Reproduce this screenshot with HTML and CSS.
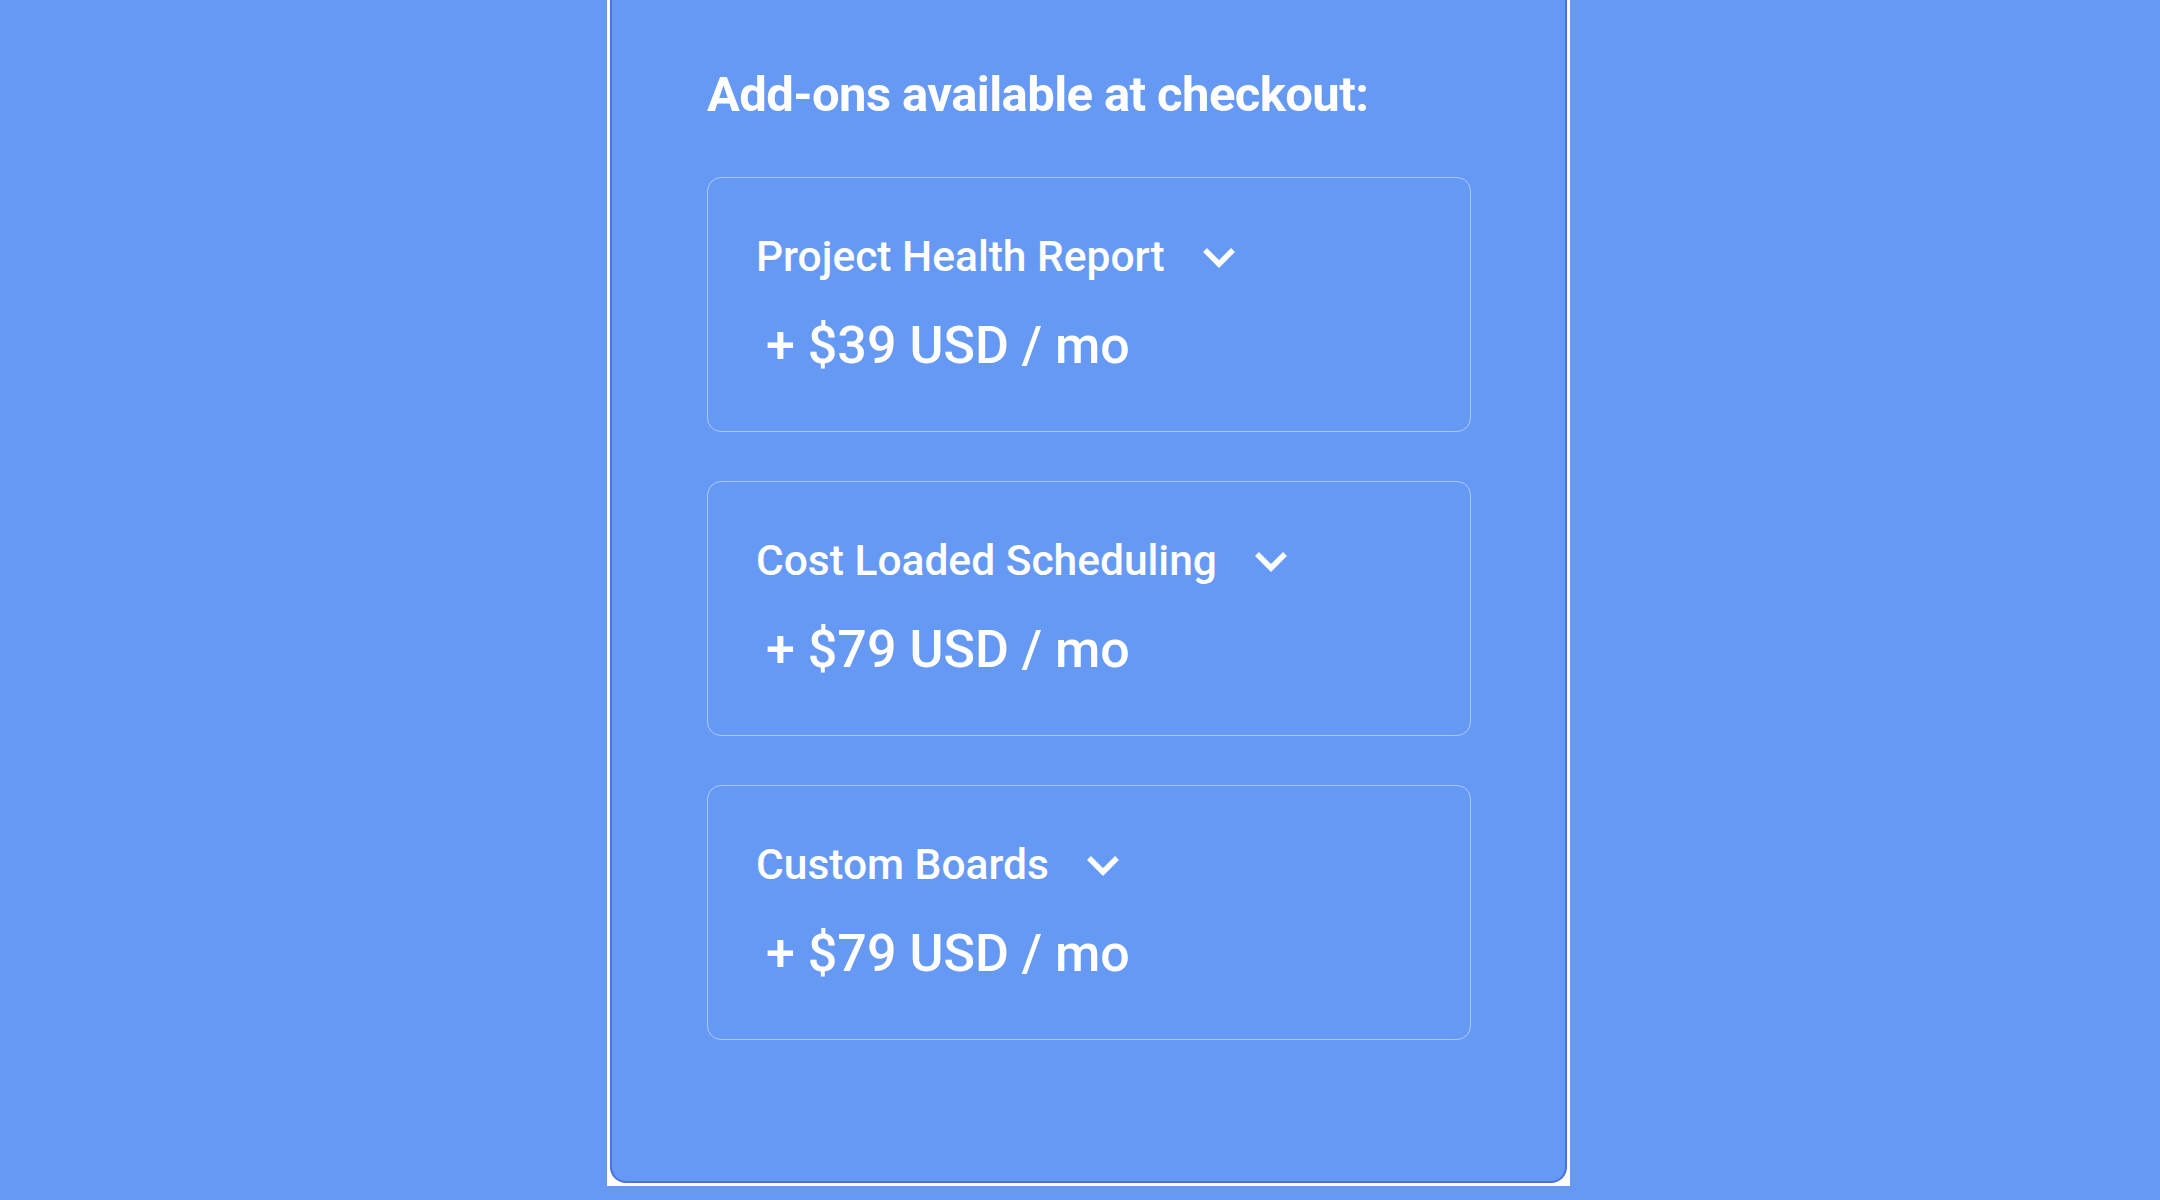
FILE: index.html
```html
<!DOCTYPE html>
<html lang="en">
<head>
    <meta charset="UTF-8">
    <meta name="viewport" content="width=device-width, initial-scale=1.0">
    <title>Add-ons</title>
    <link rel="stylesheet" href="styles.css">
</head>
<body>
    <div class="frame">
        <section class="panel">
            <h2 class="addons-title">Add-ons available at checkout:</h2>

            <div class="addon">
                <div class="addon-head">
                    <span class="addon-name">Project Health Report</span>
                    <svg class="chevron" width="34" height="22" viewBox="0 0 34 22">
                        <polyline points="3,4 17,18 31,4" />
                    </svg>
                </div>
                <p class="addon-price">+ $39 USD / mo</p>
            </div>

            <div class="addon">
                <div class="addon-head">
                    <span class="addon-name">Cost Loaded Scheduling</span>
                    <svg class="chevron" width="34" height="22" viewBox="0 0 34 22">
                        <polyline points="3,4 17,18 31,4" />
                    </svg>
                </div>
                <p class="addon-price">+ $79 USD / mo</p>
            </div>

            <div class="addon">
                <div class="addon-head">
                    <span class="addon-name">Custom Boards</span>
                    <svg class="chevron" width="34" height="22" viewBox="0 0 34 22">
                        <polyline points="3,4 17,18 31,4" />
                    </svg>
                </div>
                <p class="addon-price">+ $79 USD / mo</p>
            </div>
        </section>
    </div>
</body>
</html>
```

FILE: styles.css
```css
body {
    margin: 0;
    padding: 0 0 0 17px;
    background-color: #6699f4;
    font-family: Roboto, "Liberation Sans", sans-serif;
    color: #fff;
    display: flex;
    justify-content: center;
    align-items: flex-start;
    min-height: 100vh;
}

.frame {
    width: 963px;
    box-sizing: border-box;
    background: #fff;
    padding: 0 3px 3px 3px;
}

.panel {
    background: #6699f4;
    border: 2px solid #4a70e6;
    border-top: none;
    border-radius: 0 0 16px 16px;
    padding: 67px 94px 141px 95px;
}

.addons-title {
    margin: 0 0 54px;
    font-size: 49px;
    line-height: 56px;
    font-weight: 700;
    letter-spacing: -0.6px;
}

.addon {
    border: 1px solid rgba(255, 255, 255, 0.45);
    border-radius: 14px;
    padding: 55px 48px 55px;
    margin-bottom: 49px;
}

.addon:last-child {
    margin-bottom: 0;
}

.addon-head {
    display: flex;
    align-items: center;
    gap: 37px;
}

.addon-name {
    font-size: 42.5px;
    line-height: 48px;
    font-weight: 500;
}

.chevron polyline {
    fill: none;
    stroke: #fff;
    stroke-width: 5.5;
}

.addon-price {
    margin: 35px 0 0 10px;
    font-size: 52px;
    line-height: 60px;
    font-weight: 500;
}
```
